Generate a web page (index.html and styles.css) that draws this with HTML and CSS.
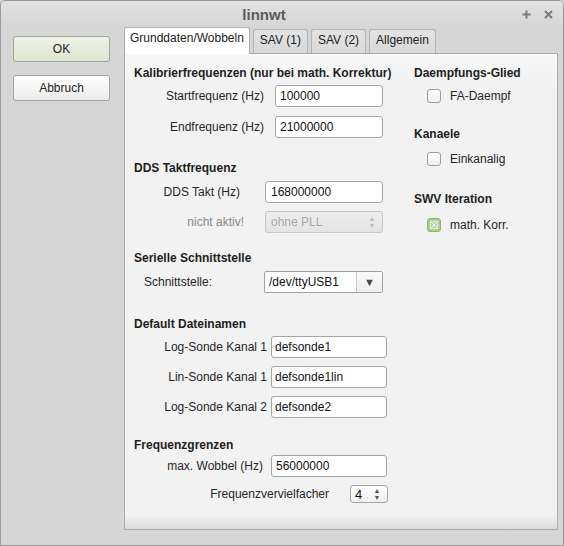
FILE: index.html
```html
<!DOCTYPE html>
<html>
<head>
<meta charset="utf-8">
<link rel="stylesheet" href="styles.css">
</head>
<body>
<div class="window">
  <div class="titlebar">
    <span class="title">linnwt</span>
    <span class="wm-btns">
      <svg class="wm-icon" width="9" height="9" viewBox="0 0 9 9"><path d="M4.5 0.5V8.5M0.5 4.5H8.5" stroke="#7a7a7a" stroke-width="2" fill="none"/></svg>
      <svg class="wm-icon" width="9" height="9" viewBox="0 0 9 9"><path d="M1 1L8 8M8 1L1 8" stroke="#7a7a7a" stroke-width="2" fill="none"/></svg>
    </span>
  </div>
  <div class="body">
    <div class="side">
      <button class="btn btn-ok">OK</button>
      <button class="btn">Abbruch</button>
    </div>
    <div class="tabwidget">
      <div class="tabbar">
        <div class="tab active">Grunddaten/Wobbeln</div>
        <div class="tab">SAV (1)</div>
        <div class="tab">SAV (2)</div>
        <div class="tab">Allgemein</div>
      </div>
      <div class="pane">
        <div class="col-left">
          <div class="h">Kalibrierfrequenzen (nur bei math. Korrektur)</div>
          <div class="row g1 mt5"><span class="lbl">Startfrequenz (Hz)</span><span class="field">100000</span></div>
          <div class="row g1 mt9"><span class="lbl">Endfrequenz (Hz)</span><span class="field">21000000</span></div>

          <div class="h mt23">DDS Taktfrequenz</div>
          <div class="row g2 mt6"><span class="lbl lbl-dds">DDS Takt (Hz)</span><span class="field">168000000</span></div>
          <div class="row g2 mt8"><span class="lbl lbl-na">nicht aktiv!</span>
            <span class="combo-dis"><span class="combo-text">ohne PLL</span><span class="spin-arrows dis"><span>▲</span><span>▼</span></span></span>
          </div>

          <div class="h mt18">Serielle Schnittstelle</div>
          <div class="row g3 mt6"><span class="lbl">Schnittstelle:</span>
            <span class="combo"><span class="combo-text">/dev/ttyUSB1</span><span class="combo-btn">▼</span></span>
          </div>

          <div class="h mt24">Default Dateinamen</div>
          <div class="row g4 mt5"><span class="lbl">Log-Sonde Kanal 1</span><span class="field">defsonde1</span></div>
          <div class="row g4 mt8"><span class="lbl">Lin-Sonde Kanal 1</span><span class="field">defsonde1lin</span></div>
          <div class="row g4 mt8"><span class="lbl">Log-Sonde Kanal 2</span><span class="field">defsonde2</span></div>

          <div class="h mt20">Frequenzgrenzen</div>
          <div class="row g5 mt3"><span class="lbl">max. Wobbel (Hz)</span><span class="field">56000000</span></div>
          <div class="row row-spin g6 mt8"><span class="lbl">Frequenzvervielfacher</span>
            <span class="spin"><span class="spin-text">4</span><span class="spin-arrows"><span>▲</span><span>▼</span></span></span>
          </div>
        </div>
        <div class="col-right">
          <div class="h">Daempfungs-Glied</div>
          <div class="check-row mt9"><span class="cb"></span><span class="cb-label">FA-Daempf</span></div>
          <div class="h mt24">Kanaele</div>
          <div class="check-row mt11"><span class="cb"></span><span class="cb-label">Einkanalig</span></div>
          <div class="h mt26">SWV Iteration</div>
          <div class="check-row mt12">
            <svg class="cb-svg" width="14" height="14" viewBox="0 0 14 14">
              <rect x="0.5" y="0.5" width="13" height="13" rx="2.5" fill="#a9d18c" stroke="#8db672"/>
              <rect x="3" y="3" width="8" height="8" rx="1" fill="#e8f3df"/>
              <path d="M4.5 4.5L9.5 9.5M9.5 4.5L4.5 9.5" stroke="#8a9a80" stroke-width="2.6" fill="none"/>
              <path d="M4.5 4.5L9.5 9.5M9.5 4.5L4.5 9.5" stroke="#ffffff" stroke-width="1.4" fill="none"/>
            </svg>
            <span class="cb-label">math. Korr.</span>
          </div>
        </div>
      </div>
    </div>
  </div>
</div>
</body>
</html>
```

FILE: styles.css
```css
* { box-sizing: border-box; }
html, body { margin: 0; padding: 0; }
body {
  width: 564px;
  height: 546px;
  overflow: hidden;
  font-family: "Liberation Sans", Arial, sans-serif;
  font-size: 12px;
  color: #222;
  background: #d6d6d6;
}
.window {
  width: 564px;
  height: 546px;
  border: 1px solid #9a9a9a;
  border-radius: 5px 5px 0 0;
  background: #d6d6d6;
  display: flex;
  flex-direction: column;
}
.titlebar {
  height: 26px;
  flex: none;
  display: flex;
  align-items: center;
  background: linear-gradient(#e2e2e2, #d6d6d6);
  border-radius: 4px 4px 0 0;
}
.title {
  flex: 1;
  text-align: center;
  padding-left: 5px;
  font-weight: bold;
  font-size: 15px;
  color: #5c5c5c;
}
.wm-btns {
  display: flex;
  align-items: center;
  gap: 13px;
  padding-right: 10px;
}
.wm-icon { display: block; }

.body {
  flex: 1;
  display: flex;
  padding-left: 12px;
}
.side {
  width: 97px;
  flex: none;
  padding-top: 9px;
  display: flex;
  flex-direction: column;
  gap: 13px;
}
.btn {
  height: 26px;
  width: 97px;
  border: 1px solid #a4a4a4;
  border-radius: 3px;
  background: linear-gradient(#ffffff, #ececec);
  font: inherit;
  color: #222;
  padding: 0;
}
.btn-ok {
  background: linear-gradient(#eef3e8, #dde6d1);
  border-color: #9eaa95;
}

.tabwidget {
  margin-left: 14px;
  width: 434px;
  display: flex;
  flex-direction: column;
}
.tabbar {
  height: 26px;
  display: flex;
  align-items: flex-end;
  gap: 3px;
  position: relative;
  z-index: 1;
}
.tab {
  height: 24px;
  padding: 0 6px 3px;
  display: flex;
  align-items: center;
  border: 1px solid #b3b3b3;
  border-bottom: none;
  border-radius: 3px 3px 0 0;
  background: linear-gradient(#e3e3e3, #d9d9d9);
}
.tab.active {
  height: 27px;
  margin-bottom: -1px;
  padding: 0 5px 6px;
  background: #ffffff;
  border-color: #b0b0b0;
}
.pane {
  height: 477px;
  border: 1px solid #acacac;
  background: linear-gradient(#f8f8f8, #f2f2f2 30px, #f2f2f2 calc(100% - 14px), #dadada);
  display: flex;
  padding: 12px 0 0 9px;
}
.col-left { width: 280px; flex: none; }
.col-right { flex: 1; }

.h {
  font-weight: bold;
  line-height: 14px;
  height: 14px;
  color: #1e1e1e;
  white-space: nowrap;
}
.mt3 { margin-top: 3px; }
.mt5 { margin-top: 5px; }
.mt6 { margin-top: 6px; }
.mt8 { margin-top: 8px; }
.mt9 { margin-top: 9px; }
.mt11 { margin-top: 11px; }
.mt12 { margin-top: 12px; }
.mt18 { margin-top: 18px; }
.mt20 { margin-top: 20px; }
.mt23 { margin-top: 23px; }
.mt24 { margin-top: 24px; }
.mt26 { margin-top: 26px; }

.row {
  display: flex;
  align-items: center;
  height: 22px;
}
.lbl {
  flex: none;
  text-align: right;
  white-space: nowrap;
  color: #262626;
}
.field {
  height: 22px;
  display: flex;
  align-items: center;
  padding-left: 4px;
  background: #fff;
  border: 1px solid #a6a6a6;
  border-radius: 3px;
  color: #111;
}
.g1 .lbl { width: 130px; margin-right: 11px; }
.g1 .field { width: 108px; }
.g2 .lbl { width: 131px; }
.g2 .lbl-dds { padding-right: 25px; }
.g2 .lbl-na { padding-right: 21px; color: #8a8a8a; }
.g2 .field { width: 118px; padding-left: 5px; }
.g3 .lbl { width: 130px; padding-left: 10px; text-align: left; }
.g4 .lbl { width: 133px; margin-right: 4px; }
.g4 .field { width: 116px; padding-left: 3px; }
.g5 .lbl { width: 129px; margin-right: 8px; }
.g5 .field { width: 116px; padding-left: 4px; }
.row-spin { height: 18px; }
.g6 .lbl { width: 195px; margin-right: 21px; }

.combo-dis {
  width: 118px;
  height: 22px;
  display: flex;
  align-items: center;
  border: 1px solid #c8c8c8;
  border-radius: 3px;
  background: linear-gradient(#eeeeee, #e4e4e4);
  color: #a8a8a8;
}
.combo-text { flex: 1; padding-left: 5px; white-space: nowrap; }
.spin-arrows {
  width: 14px;
  display: flex;
  flex-direction: column;
  align-items: center;
  font-size: 7px;
  line-height: 7px;
  color: #555;
}
.spin-arrows.dis { color: #b8b8b8; margin-right: 3px; }

.combo {
  width: 119px;
  height: 22px;
  display: flex;
  border: 1px solid #a2a2a2;
  border-radius: 2px;
  background: #fff;
  color: #111;
}
.combo .combo-text { padding-left: 4px; display: flex; align-items: center; }
.combo-btn {
  width: 26px;
  flex: none;
  display: flex;
  align-items: center;
  justify-content: center;
  border-left: 1px solid #c6c6c6;
  background: linear-gradient(#fafafa, #efefef);
  font-size: 11px;
  color: #4a4a4a;
}

.spin {
  width: 38px;
  height: 18px;
  display: flex;
  align-items: center;
  border: 1px solid #a4a4a4;
  border-radius: 3px;
  background: linear-gradient(#ffffff, #f0f0f0);
  color: #111;
}
.spin-text { flex: 1; padding-left: 4px; font-size: 13px; }
.spin .spin-arrows { margin-right: 3px; }

.check-row {
  display: flex;
  align-items: center;
  height: 14px;
  padding-left: 13px;
}
.cb {
  width: 14px;
  height: 14px;
  flex: none;
  border: 1px solid #9c9c9c;
  border-radius: 3px;
  background: linear-gradient(#ffffff, #f0f0f0);
}
.cb-svg { display: block; flex: none; }
.cb-label { margin-left: 9px; color: #262626; white-space: nowrap; }
```
